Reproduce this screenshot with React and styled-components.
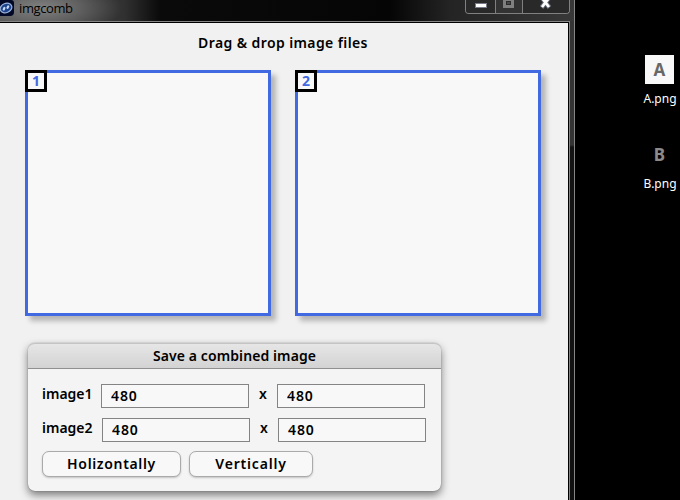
import React from "react";
import styled, { createGlobalStyle } from "styled-components";

const Global = createGlobalStyle`
  *, *::before, *::after { box-sizing: border-box; }
  body { margin: 0; background: #000; overflow: hidden; }
`;

const Desktop = styled.div`
  display: flex;
  width: 680px;
  height: 500px;
  overflow: hidden;
  background: #000;
  font-family: "Noto Sans", "Open Sans", sans-serif;
`;

const Window = styled.section`
  display: flex;
  flex-direction: column;
  width: 575px;
  height: 500px;
  border-right: 1px solid #858585;
  background: linear-gradient(#343434 0, #343434 145px, #141414 147px, #101010 100%);
`;

const TitleBar = styled.header`
  display: flex;
  align-items: flex-start;
  flex: none;
  width: 574px;
  height: 21px;
  background:
    radial-gradient(ellipse 80px 28px at 42px 8px, rgba(160, 160, 160, 0.65), rgba(120, 120, 120, 0) 100%),
    linear-gradient(90deg, #4c4c4c 0, #404040 75px, #303030 125px, #0a0a0a 160px, #050505 390px, #242424 450px, #383838 574px);
`;

const AppIcon = styled.svg`
  flex: none;
  width: 14px;
  height: 16px;
`;

const WindowTitle = styled.span`
  margin-left: 5px;
  flex: 1;
  font: 400 13px/16px "Open Sans", sans-serif;
  letter-spacing: -0.4px;
  color: #000;
`;

const WindowControls = styled.div`
  display: flex;
  flex: none;
  width: 105px;
  height: 14px;
  margin-right: 4px;
  border: 1px solid #808080;
  border-top: 0;
  border-radius: 0 0 4px 4px;
  overflow: hidden;
  background: #292929;
`;

const ControlButton = styled.div`
  width: ${(p) => p.$width}px;
  height: 13px;
  border-right: ${(p) => (p.$last ? 0 : "1px solid #808080")};
  background: ${(p) => (p.$dim ? "#333" : "#292929")};

  svg { display: block; }
`;

const Client = styled.main`
  flex: 1;
  width: 570px;
  border: solid #858585;
  border-width: 1px 1px 0 0;
`;

const Page = styled.div`
  height: 100%;
  border: solid #000;
  border-width: 1px 1px 0 0;
  padding: 10px 0 0 25px;
  background: #f1f1f1;
`;

const Heading = styled.h1`
  margin: 0 0 17px;
  width: 516px;
  font-size: 14px;
  line-height: 20px;
  font-weight: 600;
  letter-spacing: 0.4px;
  text-align: center;
  color: #000;
`;

const DropZones = styled.div`
  display: flex;
  gap: 24px;
`;

const DropZone = styled.div`
  width: 246px;
  height: 246px;
  border: 3px solid #4169e1;
  background: #f8f8f8;
  box-shadow: 5px 5px 5px rgba(0, 0, 0, 0.25);
`;

const Badge = styled.div`
  width: 22px;
  height: 22px;
  margin: -3px 0 0 -3px;
  border: 3px solid #000;
  background: #f8f8f8;
  color: #4169e1;
  font-size: 14px;
  line-height: 16px;
  font-weight: 700;
  text-align: center;
`;

const Panel = styled.section`
  width: 413px;
  height: 148px;
  margin: 27px 0 0 3px;
  border-radius: 7px;
  background: #f4f4f4;
  box-shadow: 0 0 1px rgba(0, 0, 0, 0.55), 0 4px 8px rgba(0, 0, 0, 0.5);
`;

const PanelHeader = styled.h2`
  margin: 0;
  height: 26px;
  border-top: 1px solid #c4c4c4;
  border-bottom: 1px solid #909090;
  border-radius: 7px 7px 0 0;
  background: linear-gradient(#e6e6e6, #d3d3d3);
  font-size: 14px;
  line-height: 24px;
  font-weight: 600;
  letter-spacing: 0.1px;
  text-align: center;
  color: #000;
`;

const SizeRow = styled.div`
  display: flex;
  align-items: flex-start;
  height: 24px;
  margin: ${(p) => p.$top}px 0 0 14px;
`;

const Label = styled.label`
  width: ${(p) => p.$width}px;
  font-size: 14px;
  line-height: 19px;
  font-weight: 600;
  color: #000;
`;

const Times = styled.span`
  width: 28px;
  font-size: 14px;
  line-height: 20px;
  font-weight: 600;
  text-align: center;
  color: #000;
`;

const Field = styled.input`
  width: 148px;
  height: 24px;
  padding: 0 9px 2px;
  border: 1px solid #848484;
  border-radius: 0;
  outline: 0;
  background: #f8f8f8;
  font: 600 14px/20px "Noto Sans", sans-serif;
  letter-spacing: 0.9px;
  color: #000;
`;

const Actions = styled.div`
  display: flex;
  gap: 8px;
  margin: 9px 0 0 14px;
`;

const ActionButton = styled.button`
  width: ${(p) => p.$width}px;
  height: 26px;
  padding: 0;
  border: 1px solid #aaa;
  border-radius: 7px;
  background: #f8f8f8;
  box-shadow: 0 1px 2px rgba(0, 0, 0, 0.2);
  font: 600 14px/24px "Noto Sans", sans-serif;
  letter-spacing: ${(p) => p.$spacing}px;
  color: #000;
`;

const FileList = styled.aside`
  display: flex;
  flex-direction: column;
  gap: 20px;
  margin: 55px 0 0 68px;
`;

const FileItem = styled.div`
  display: flex;
  flex-direction: column;
  align-items: center;
  width: 34px;
  height: 65px;
`;

const Thumb = styled.div`
  width: 29px;
  height: 29px;
  margin-left: -1px;
  background: ${(p) => p.$bg};
  color: ${(p) => p.$color};
  font-size: 17px;
  line-height: 29px;
  font-weight: 700;
  text-align: center;
`;

const FileName = styled.span`
  margin-top: 6px;
  font: 12px/17px "Noto Sans", sans-serif;
  color: #fff;
  white-space: nowrap;
`;

const sizes = [
  { name: "image1", labelWidth: 59, top: 15 },
  { name: "image2", labelWidth: 60, top: 10 },
];

export default function App() {
  return (
    <Desktop>
      <Global />
      <Window>
        <TitleBar>
          <AppIcon viewBox="0 0 14 16">
            <path d="M0 0H11Q14 0 14 3V12Q14 16 10 16H0Z" fill="#020927" />
            <ellipse cx="6" cy="8" rx="6" ry="4.6" transform="rotate(-22 6 8)" fill="#1c438c" stroke="#9ab4dc" strokeWidth="1.2" />
            <path d="M3.7 9.4L4.4 8M7.5 7.8L8.2 6.5" stroke="#c8dafa" strokeWidth="2.2" strokeLinecap="round" />
          </AppIcon>
          <WindowTitle>imgcomb</WindowTitle>
          <WindowControls>
            <ControlButton $width={30}>
              <svg width="29" height="13"><rect x="9.5" y="3.5" width="11" height="4" fill="#fff" stroke="#777b88" /></svg>
            </ControlButton>
            <ControlButton $width={27} $dim>
              <svg width="26" height="13">
                <path d="M7 -1H18V8H7Z" fill="#808080" />
                <rect x="10" y="1" width="5" height="4" fill="#2b2b2b" />
                <rect x="11" y="2" width="3" height="2" fill="#4a4a4a" />
              </svg>
            </ControlButton>
            <ControlButton $width={46} $last>
              <svg width="46" height="13">
                <path d="M19 -2L26.5 7.5M26 -2L18.5 7.5" stroke="#686d7a" strokeWidth="4.5" />
                <path d="M19 -2L26 7M26 -2L19 7" stroke="#fff" strokeWidth="2.7" />
              </svg>
            </ControlButton>
          </WindowControls>
        </TitleBar>
        <Client>
          <Page>
            <Heading>Drag &amp; drop image files</Heading>
            <DropZones>
              <DropZone><Badge>1</Badge></DropZone>
              <DropZone><Badge>2</Badge></DropZone>
            </DropZones>
            <Panel>
              <PanelHeader>Save a combined image</PanelHeader>
              {sizes.map((s) => (
                <SizeRow key={s.name} $top={s.top}>
                  <Label $width={s.labelWidth}>{s.name}</Label>
                  <Field defaultValue="480" />
                  <Times>x</Times>
                  <Field defaultValue="480" />
                </SizeRow>
              ))}
              <Actions>
                <ActionButton $width={139} $spacing={0.65}>Holizontally</ActionButton>
                <ActionButton $width={124} $spacing={0.8}>Vertically</ActionButton>
              </Actions>
            </Panel>
          </Page>
        </Client>
      </Window>
      <FileList>
        <FileItem>
          <Thumb $bg="#f8f8f8" $color="#686868">A</Thumb>
          <FileName>A.png</FileName>
        </FileItem>
        <FileItem>
          <Thumb $bg="#000" $color="#8b8b8b">B</Thumb>
          <FileName>B.png</FileName>
        </FileItem>
      </FileList>
    </Desktop>
  );
}
